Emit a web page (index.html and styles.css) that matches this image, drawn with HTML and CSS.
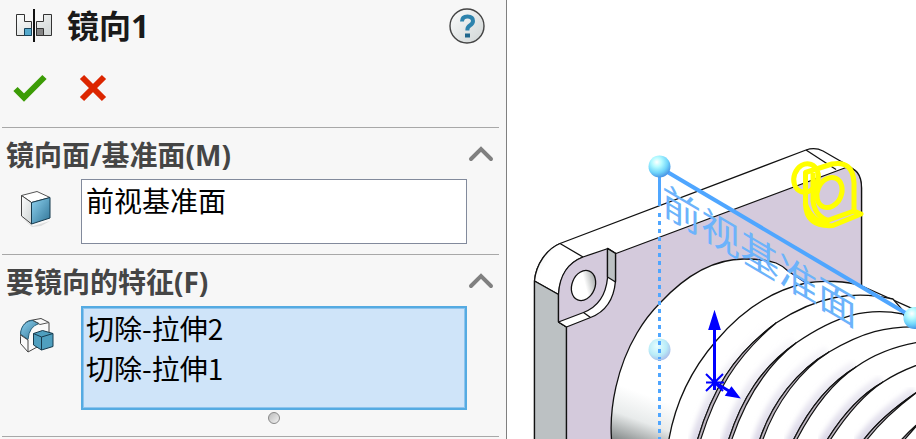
FILE: index.html
```html
<!DOCTYPE html>
<html lang="zh-CN">
<head>
    <meta charset="UTF-8">
    <meta name="viewport" content="width=device-width, initial-scale=1.0">
    <title>镜向1</title>
    <link rel="stylesheet" href="styles.css">
</head>
<body>
    <form class="panel">
        <header class="panel-header">
            <svg class="mirror-icon" width="38" height="34" viewBox="0 0 38 34" aria-hidden="true">
                <defs>
                    <linearGradient id="steel" x1="0" y1="0" x2="1" y2="1">
                        <stop offset="0" stop-color="#fcfdfd"/>
                        <stop offset="1" stop-color="#cfd4d4"/>
                    </linearGradient>
                    <linearGradient id="blue" x1="0" y1="0" x2="1" y2="1">
                        <stop offset="0" stop-color="#8fd3f0"/>
                        <stop offset="1" stop-color="#2f7396"/>
                    </linearGradient>
                </defs>
                <path d="M1.500 5.500h8v7h7v14h-15zM36.500 5.500h-8v7h-7v14h15z" fill="url(#steel)" stroke="#333"/>
                <path d="M9.500 19.500h7v7h-7z" fill="#55a9cc" stroke="#17425a"/>
                <path d="M21.500 19.500h7v7h-7z" fill="#858585" stroke="#333"/>
                <path d="M19 0v33" stroke="#111" stroke-width="2"/>
            </svg>
            <h1 class="title">镜向1</h1>
            <button type="button" class="icon-button help" aria-label="帮助">
                <svg width="36" height="36" viewBox="0 0 36 36" aria-hidden="true">
                    <circle cx="18" cy="18" r="17" fill="url(#steel)" stroke="#444" stroke-width="1.400"/>
                    <path d="M13 13.500q0-5 5.500-5t5.500 4.500q0 2.500-2.800 4.300t-2.800 4.200v1" fill="none" stroke="#2d83ad" stroke-width="4"/>
                    <path d="M16 25.500h5v4h-5z" fill="#1f668c"/>
                </svg>
            </button>
        </header>

        <div class="actions">
            <button type="submit" class="icon-button" aria-label="确定">
                <svg width="34" height="28" viewBox="0 0 34 28" aria-hidden="true">
                    <path d="M2.500 15L11 23.500 31.500 3" fill="none" stroke="#3c9c06" stroke-width="6"/>
                </svg>
            </button>
            <button type="reset" class="icon-button" aria-label="取消">
                <svg width="28" height="28" viewBox="0 0 28 28" aria-hidden="true">
                    <path d="M3 3l22 22M25 3L3 25" stroke="#dc2600" stroke-width="6"/>
                </svg>
            </button>
        </div>

        <section class="group">
            <div class="group-header">
                <label class="group-title" for="mirror-plane">镜向面/基准面(M)</label>
                <button type="button" class="icon-button" aria-label="折叠">
                    <svg width="26" height="16" viewBox="0 0 26 16" aria-hidden="true">
                        <path d="M3 13L13 3l10 10" fill="none" stroke="#808080" stroke-width="4" stroke-linecap="round"/>
                    </svg>
                </button>
            </div>
            <div class="field">
                <svg class="field-icon" width="36" height="38" viewBox="0 0 36 38" aria-hidden="true">
                    <path d="M3 29l11 8 17-5-9 5-9 1z" fill="#ddd"/>
                    <path d="M2.500 6.500L18 2.500l13 6-18.500 5z" fill="#fff" stroke="#555"/>
                    <path d="M2.500 6.500l10 7V35l-10-8z" fill="url(#steel)" stroke="#444"/>
                    <path d="M12.500 13.500L31 8.500V29l-18.500 6z" fill="url(#blue)" stroke="#173b4e"/>
                </svg>
                <textarea class="selection plane" id="mirror-plane" readonly>前视基准面</textarea>
            </div>
        </section>

        <section class="group">
            <div class="group-header">
                <label class="group-title" for="mirror-features">要镜向的特征(F)</label>
                <button type="button" class="icon-button" aria-label="折叠">
                    <svg width="26" height="16" viewBox="0 0 26 16" aria-hidden="true">
                        <path d="M3 13L13 3l10 10" fill="none" stroke="#808080" stroke-width="4" stroke-linecap="round"/>
                    </svg>
                </button>
            </div>
            <div class="field">
                <svg class="field-icon" width="36" height="38" viewBox="0 0 36 38" aria-hidden="true">
                    <path d="M1.500 20.500C2 11 6 5.500 11 4.500l11-2 8 4v18L9 36l-7.500-8.500z" fill="#fafafa" stroke="#444"/>
                    <path d="M1.500 18C2 9 8 4.500 14 4.500l6 3q-10 3-11 16z" fill="url(#blue)" stroke="#24607c"/>
                    <path d="M1.500 19l7.500 5v12" fill="none" stroke="#444"/>
                    <path d="M14 4.500l7 4 9-2" fill="none" stroke="#555"/>
                    <path d="M14.500 17.500l9-3 10.500 3v13L22.500 34l-8-5z" fill="#4f9fbf" stroke="#173b4e"/>
                    <path d="M14.500 17.500l8 3.500L34 17.500M22.500 21v13" fill="none" stroke="#173b4e"/>
                </svg>
                <textarea class="selection features" id="mirror-features" readonly>切除-拉伸2
切除-拉伸1</textarea>
            </div>
            <div class="grip-row">
                <div class="grip"></div>
            </div>
        </section>
    </form>

    <main class="viewport">
        <svg class="model" viewBox="507 0 409 439" preserveAspectRatio="xMinYMin slice" role="img" aria-label="模型">
            <defs>
                <radialGradient id="ball" cx="0.380" cy="0.300" r="0.750">
                    <stop offset="0" stop-color="#fff"/>
                    <stop offset="0.300" stop-color="#b5fbff"/>
                    <stop offset="0.650" stop-color="#70d5fb"/>
                    <stop offset="1" stop-color="#438ae0"/>
                </radialGradient>
                <radialGradient id="ball-pale" cx="0.400" cy="0.350" r="0.700">
                    <stop offset="0" stop-color="#e9ffff"/>
                    <stop offset="0.600" stop-color="#b9ecf8"/>
                    <stop offset="1" stop-color="#a9b9e8"/>
                </radialGradient>
                <linearGradient id="corner" x1="0" y1="0" x2="1" y2="0.600">
                    <stop offset="0" stop-color="#e4e8e8"/>
                    <stop offset="0.350" stop-color="#fff"/>
                </linearGradient>
                <linearGradient id="boss" gradientUnits="userSpaceOnUse" x1="650" y1="396" x2="632" y2="446">
                    <stop offset="0" stop-color="#fff"/>
                    <stop offset="0.500" stop-color="#e8ebeb"/>
                    <stop offset="1" stop-color="#858a8a"/>
                </linearGradient>
                <linearGradient id="bore" x1="0" y1="1" x2="1" y2="0">
                    <stop offset="0.550" stop-color="#fff"/>
                    <stop offset="1" stop-color="#808686"/>
                </linearGradient>
                <linearGradient id="shade" gradientUnits="userSpaceOnUse" x1="0" y1="320" x2="0" y2="439">
                    <stop offset="0" stop-color="#dcd9e8" stop-opacity="0"/>
                    <stop offset="1" stop-color="#dcd9e8"/>
                </linearGradient>
                <filter id="soft">
                    <feGaussianBlur stdDeviation="2.500"/>
                </filter>
            </defs>

            <!-- flange -->
            <g class="edge">
                <path d="M534.500 445V281C536 264 547 249 560 243.500L806 150Q815 147 823 151L849 166Q861.500 174 861.500 188V286L740 445z" fill="#fff"/>
                <path d="M534.500 281C536 264 547 249 560 243.500L583 257Q561 265 558.500 294.500z" fill="url(#corner)"/>
                <path d="M534.500 281l24 13.500V322l8 5v118h-32z" fill="#bcc1c3"/>
                <path d="M558.500 322V294Q560 266 583 257L608 248.500l8 5L846 167.500Q861.500 168 861.500 188V300L740 445H566.500V327z" fill="#d4cadc"/>
                <path d="M806 150l30 19.500"/>
                <path d="M558.500 322l25-9.500Q605 304 607.500 278V248.500l8 5V281Q613 309 590.500 317.500L566.500 327z" fill="#fff"/>
                <path d="M607.500 248.500l8 5V282l-8-5z" fill="#bcc1c3"/>
                <path d="M583.500 312.500l7 5"/>
                <ellipse cx="583.500" cy="285.500" rx="11.500" ry="15.500" transform="rotate(22 583.500 285.500)" fill="url(#bore)"/>
            </g>

            <!-- boss -->
            <g class="edge">
                <path fill="url(#boss)" d="M612 445C608 408 618 365 637 333C644 321 651 312 660 303C686 275 714 259 744 259C756 259 767 260 776 263Q783 266 788 271L806 283V445z"/>
                <path fill="#fff" d="M668 445C674 405 690 371 716 341C743 309 774 290 806 283C822 280 847 281 862 286L920 312V445z"/>
            </g>

            <!-- ribs -->
            <path class="shade" d="M696 445C711 391 733 361 776 323"/>
            <path class="rib" d="M696 445C711 391 733 355 776 323C817 296 854 290 893 299L920 330V445z"/>
            <path class="shade" d="M727 445C741 398 763 366 796 343"/>
            <path class="rib" d="M727 445C741 398 763 366 796 343C837 315 867 307 903 314L920 340V445z"/>
            <path class="shade" d="M758 445C771 402 799 369 829 352"/>
            <path class="rib" d="M758 445C771 402 799 369 829 352C863 332 886 326 920 327V445z"/>
            <path class="shade" d="M791 445C807 411 829 383 856 367"/>
            <path class="rib" d="M791 445C807 411 829 383 856 367Q883 348 920 342V445z"/>
            <path class="shade" d="M824 445C840 418 860 395 883 382"/>
            <path class="rib" d="M824 445C840 418 860 395 883 382Q898 372 920 364V445z"/>
            <path class="shade" d="M860 445Q878 418 916 393"/>
            <path class="rib" d="M860 445Q878 418 920 390V445z"/>
            <path class="rib" d="M897 445Q908 432 920 422V445z"/>
            <g class="groove">
                <path d="M696 445C711 391 733 355 776 323C736 357 715 391 699 445z"/>
                <path d="M727 445C741 398 763 366 796 343C766 366 745 398 730 445z"/>
                <path d="M758 445C771 402 799 369 829 352C802 369 775 402 761 445z"/>
                <path d="M791 445C807 411 829 383 856 367C832 383 811 411 794 445z"/>
                <path d="M824 445C840 418 860 395 883 382C863 395 844 418 827 445z"/>
                <path d="M860 445Q878 418 920 390Q882 418 863 445z"/>
                <path d="M897 445Q908 432 920 422Q911 432 900 445z"/>
            </g>

            <!-- reference plane -->
            <path class="plane-line" d="M659.500 167v39"/>
            <path class="plane-line hidden-line" d="M659.500 213V439"/>
            <path class="plane-line plane-edge" d="M659 167L914 318"/>
            <text class="plane-label" transform="translate(662 213) skewY(30.600)">前视基准面</text>
            <circle cx="659.500" cy="166.500" r="11" fill="url(#ball)"/>
            <circle cx="659.500" cy="349.500" r="11" fill="url(#ball-pale)"/>
            <path class="plane-line hidden-line" d="M659.500 341v18"/>
            <circle cx="914.500" cy="318" r="11" fill="url(#ball)"/>

            <!-- selected feature -->
            <g class="highlight">
                <ellipse cx="806" cy="178" rx="12" ry="14.500" transform="rotate(20 806 178)"/>
                <path d="M805.500 172.500L832 164Q853 160 854 183V211l7 3-28 11.500q-27.500 2-27.500-22.500z"/>
                <path d="M813 173v28q2 16 17 20M805 203q6 18 24 22"/>
                <path d="M826 221l28-10"/>
                <ellipse cx="829.500" cy="192.500" rx="12" ry="15.500" transform="rotate(24 829.500 192.500)"/>
            </g>

            <!-- origin -->
            <g class="origin">
                <path class="origin-axis" d="M714.500 390V325M714 382l15 9"/>
                <path d="M706 374l17 17M706 391l17-17M706 382.500h18"/>
                <path class="origin-head" d="M714.500 313l5 16h-10zM738.500 397l-7-9-5 7z"/>
            </g>
        </svg>
    </main>
</body>
</html>
```

FILE: styles.css
```css
* {
    box-sizing: border-box;
    margin: 0;
    padding: 0;
    font-family: "Noto Sans CJK SC", "Noto Sans", sans-serif;
}

body {
    display: flex;
    height: 100vh;
    overflow: hidden;
    background-color: #fff;
}

svg {
    display: block;
}

.panel {
    flex: 0 0 auto;
    width: 55.4%;
    padding: 8px 7px 0 2px;
    background-color: #f7f7f7;
    border-right: 1px solid #808080;
    overflow: hidden;
}

.panel-header {
    display: flex;
    align-items: center;
    height: 36px;
    padding: 0 14px 0 13px;
}

.title {
    margin-left: 14px;
    font-family: "Noto Sans", "Noto Sans CJK SC", sans-serif;
    font-size: 32px;
    line-height: 36px;
    font-weight: 700;
    color: #1a1a1a;
}

.icon-button {
    border: none;
    background: none;
    cursor: pointer;
}

.help {
    margin-left: auto;
}

.actions {
    display: flex;
    align-items: center;
    gap: 32px;
    height: 83px;
    padding: 5px 0 0 11px;
}

.group {
    border-top: 1px solid #a8a8a8;
}

.group:last-child {
    border-bottom: 1px solid #a8a8a8;
}

.group-header {
    display: flex;
    align-items: center;
    justify-content: space-between;
    height: 51px;
    padding: 0 5px 0 4px;
}

.group-title {
    padding-top: 2px;
    font-family: "Noto Sans", "Noto Sans CJK SC", sans-serif;
    font-size: 28px;
    line-height: 36px;
    font-weight: 700;
    color: #454545;
}

.field {
    display: flex;
    align-items: flex-start;
    padding: 0 32px 0 17px;
}

.field-icon {
    flex: none;
    margin-top: 10px;
}

.selection {
    flex: 1;
    min-width: 0;
    margin-left: 26px;
    padding: 0 4px;
    font-size: 28px;
    line-height: 40px;
    color: #000;
    border: 1px solid #828a9c;
    background-color: #fff;
    resize: none;
    outline: none;
    overflow: hidden;
}

.plane {
    height: 65px;
    margin-bottom: 10px;
}

.features {
    height: 104px;
    padding: 0 3px;
    border: 2px solid #55abe2;
    background-color: #cfe4f9;
    box-shadow: inset 0 0 0 1px #8ec4ee;
}

.grip-row {
    display: flex;
    justify-content: center;
    padding: 2px 32px 12px 79px;
}

.grip {
    width: 12px;
    height: 12px;
    border: 1px solid #888;
    border-radius: 50%;
    background: linear-gradient(135deg, #bbb, #f2f2f2);
}

.viewport {
    flex: 1;
    min-width: 0;
}

.model {
    width: 100%;
    height: 100%;
}

.edge {
    fill: none;
    stroke: #111;
    stroke-width: 1.3;
    stroke-linejoin: round;
}

.shade {
    fill: none;
    stroke: url(#shade);
    stroke-width: 14;
    filter: url(#soft);
}

.rib {
    fill: #fff;
    stroke: #111;
    stroke-width: 1.3;
}

.groove {
    fill: #bdb5c0;
    stroke: #111;
    stroke-width: 1.2;
}

.plane-line {
    fill: none;
    stroke: #4fa6ff;
    stroke-width: 3;
}

.hidden-line {
    stroke-dasharray: 4 4;
}

.plane-edge {
    stroke-width: 4;
}

.plane-label {
    font-size: 39px;
    fill: #6cb3fb;
}

.highlight {
    fill: none;
    stroke: #ff0;
    stroke-width: 5;
    stroke-linejoin: round;
}

.origin {
    fill: none;
    stroke: #00f;
    stroke-width: 2;
}

.origin-axis {
    stroke-width: 3;
}

.origin-head {
    fill: #00f;
}
```
